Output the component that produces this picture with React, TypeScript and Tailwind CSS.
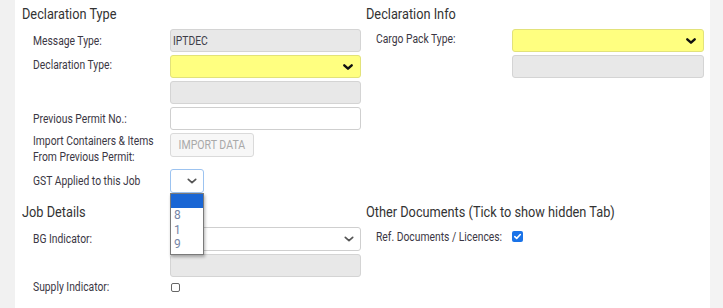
import React from 'react';

const font = { fontFamily: 'Roboto, "Liberation Sans", sans-serif' };

const Chevron: React.FC<{ thin?: boolean }> = ({ thin }) => (
  <svg width="10" height="6" viewBox="0 0 10 6" className="shrink-0">
    <path
      d="M1.3 1.3 L5 4.7 L8.7 1.3"
      fill="none"
      stroke={thin ? '#555' : '#111'}
      strokeWidth={thin ? 1.7 : 2.4}
      strokeLinecap="round"
      strokeLinejoin="round"
    />
  </svg>
);

const Label: React.FC<{ children: React.ReactNode; className?: string }> = ({ children, className }) => (
  <div className={`text-[12px] leading-[16px] text-[#3b3744] ${className ?? ''}`}>
    <span className="inline-block origin-left scale-x-[0.86] whitespace-nowrap">{children}</span>
  </div>
);

const Heading: React.FC<{ children: React.ReactNode }> = ({ children }) => (
  <div className="h-[18px] text-[14.5px] leading-[18px] text-[#333]">
    <span className="inline-block origin-left scale-x-[0.88] whitespace-nowrap">{children}</span>
  </div>
);

const GrayBox: React.FC<{ text?: string }> = ({ text }) => (
  <div className="flex h-[23px] flex-1 items-center rounded-[3px] border border-[#d4d4d4] bg-[#e8e8e8] px-[2px] text-[12px] text-[#3d3d48]">
    {text && <span className="inline-block origin-left scale-x-[0.86]">{text}</span>}
  </div>
);

const YellowSelect: React.FC = () => (
  <div className="flex h-[23px] flex-1 items-center justify-end rounded-[3px] border border-[#e2e27a] bg-[#ffff80] pr-[7px]">
    <Chevron />
  </div>
);

const Row: React.FC<{ label?: React.ReactNode; labelW: string; children: React.ReactNode; className?: string; labelClass?: string }> = ({
  label,
  labelW,
  children,
  className,
  labelClass,
}) => (
  <div className={`flex items-center ${className ?? ''}`}>
    <div className={labelW}>{label && <Label className={labelClass}>{label}</Label>}</div>
    <div className="flex flex-1">{children}</div>
  </div>
);

export default function App() {
  return (
    <div className="flex h-[308px] w-[723px] overflow-hidden bg-white" style={font}>
      <div className="w-[15px] bg-[#f1f1f1]" />
      <div className="flex-1 pl-[7px] pt-[6px]">
        <div className="grid grid-cols-[339px_338px] gap-x-[5px]">
          {/* Declaration Type */}
          <div className="flex flex-col">
            <Heading>Declaration Type</Heading>
            <div className="mt-[5px] flex flex-col gap-[3px] pl-[11px]">
              <Row label="Message Type:" labelW="w-[137px]">
                <GrayBox text="IPTDEC" />
              </Row>
              <Row label="Declaration Type:" labelW="w-[137px]" labelClass="-mt-[3px]">
                <YellowSelect />
              </Row>
              <Row labelW="w-[137px]">
                <GrayBox />
              </Row>
              <Row label="Previous Permit No.:" labelW="w-[137px]">
                <div className="h-[23px] flex-1 rounded-[3px] border border-[#cfcfcf] bg-white" />
              </Row>
              <div className="flex items-start">
                <div className="w-[137px]">
                  <Label>Import Containers &amp; Items</Label>
                  <Label>From Previous Permit:</Label>
                </div>
                <div className="flex h-[24px] w-[84px] items-center justify-center rounded-[3px] border border-[#dadada] bg-[#f7f7f7] text-[12px] text-[#a9a9a9]">
                  <span className="inline-block scale-x-[0.88] whitespace-nowrap">IMPORT DATA</span>
                </div>
              </div>
              <div className="mt-[1px] flex items-center">
                <div className="w-[137px]">
                  <Label>GST Applied to this Job</Label>
                </div>
                <div className="relative">
                  <div className="flex h-[24px] w-[34px] items-center justify-end rounded-[3px] border-[1.5px] border-[#9cc3f0] bg-white pr-[6px]">
                    <Chevron thin />
                  </div>
                  <div className="absolute left-0 top-[24px] z-10 w-[34px] border border-[#7a7a7a] bg-white pb-[2px] shadow-[1px_2px_3px_rgba(0,0,0,0.3)]">
                    <div className="h-[14px] bg-[#1a66d4]" />
                    {['8', '1', '9'].map((o) => (
                      <div key={o} className="h-[14.5px] pl-[3px] text-[12px] leading-[14.5px] text-[#7685a6]">
                        {o}
                      </div>
                    ))}
                  </div>
                </div>
              </div>
            </div>
          </div>

          {/* Declaration Info */}
          <div className="flex flex-col">
            <Heading>Declaration Info</Heading>
            <div className="mt-[5px] flex flex-col gap-[3px] pl-[10px]">
              <Row label="Cargo Pack Type:" labelW="w-[136px]" labelClass="-mt-[3px]">
                <YellowSelect />
              </Row>
              <Row labelW="w-[136px]">
                <GrayBox />
              </Row>
            </div>
          </div>

          {/* Job Details */}
          <div className="mt-[11px] flex flex-col">
            <Heading>Job Details</Heading>
            <div className="mt-[5px] flex flex-col gap-[3px] pl-[11px]">
              <Row label="BG Indicator:" labelW="w-[137px]">
                <div className="flex h-[24px] flex-1 items-center justify-end rounded-[3px] border border-[#cfcfcf] bg-white pr-[6px]">
                  <Chevron thin />
                </div>
              </Row>
              <Row labelW="w-[137px]">
                <GrayBox />
              </Row>
              <Row label="Supply Indicator:" labelW="w-[137px]" className="-mt-[1px]">
                <div className="ml-[1px] h-[9px] w-[9px] rounded-[2px] border border-[#666] bg-white" />
              </Row>
            </div>
          </div>

          {/* Other Documents */}
          <div className="mt-[11px] flex flex-col">
            <Heading>Other Documents (Tick to show hidden Tab)</Heading>
            <div className="mt-[5px] flex flex-col pl-[10px]">
              <Row label="Ref. Documents / Licences:" labelW="w-[136px]" className="h-[20px]">
                <div className="mt-[-1px] flex h-[11px] w-[11px] items-center justify-center rounded-[2px] bg-[#1a73e8]">
                  <svg width="9" height="9" viewBox="0 0 9 9">
                    <path d="M1.8 4.6 L3.7 6.4 L7.3 2.5" fill="none" stroke="#fff" strokeWidth="1.6" strokeLinecap="round" strokeLinejoin="round" />
                  </svg>
                </div>
              </Row>
            </div>
          </div>
        </div>
      </div>
      <div className="w-[13px] bg-[#f3f3f3]" />
    </div>
  );
}
